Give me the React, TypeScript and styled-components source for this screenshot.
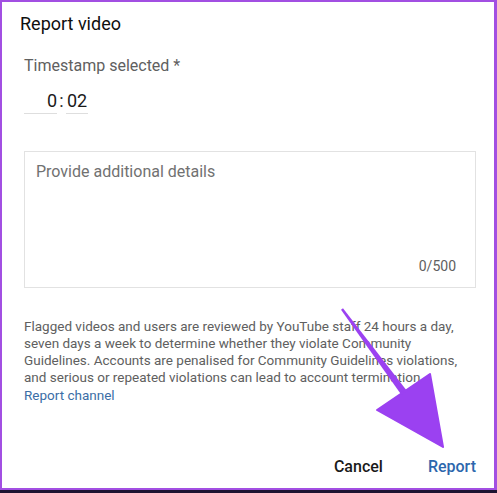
import * as React from "react";
import styled, { createGlobalStyle } from "styled-components";

const GlobalStyle = createGlobalStyle`
	html, body {
		margin: 0;
		padding: 0;
		background: #ffffff;
	}
	* {
		box-sizing: border-box;
	}
`;

const Page = styled.div`
	position: relative;
	width: 497px;
	height: 493px;
	font-family: Roboto, "Liberation Sans", Arial, sans-serif;
	background: #1d1331;
`;

const Dialog = styled.div`
	display: flex;
	flex-direction: column;
	width: 497px;
	height: 490px;
	padding: 10px 0 3px 22px;
	background: #ffffff;
	border-style: solid;
	border-color: #a24fe2;
	border-width: 2px 3px 2px 2px;
`;

const Title = styled.h2`
	margin: 0 0 19.5px -4px;
	font-size: 18px;
	line-height: 24px;
	font-weight: 400;
	color: #0f0f0f;
`;

const Label = styled.div`
	font-size: 16px;
	line-height: 20px;
	color: #606060;
`;

const TimeRow = styled.div`
	display: flex;
	align-items: flex-end;
	margin-top: 14.5px;
`;

const TimeInput = styled.input<{ $w: number; $align: "left" | "right" }>`
	width: ${(p) => p.$w}px;
	padding: ${(p) => (p.$align === "left" ? "0 0 1px 1px" : "0 0 1px 0")};
	border: none;
	border-bottom: 1px solid #dedede;
	outline: none;
	font-family: inherit;
	font-size: 18px;
	line-height: 22px;
	color: #1a1a1a;
	text-align: ${(p) => p.$align};
	background: transparent;
`;

const Colon = styled.span`
	width: 9px;
	text-align: center;
	font-size: 18px;
	line-height: 22px;
	padding-bottom: 2px;
	color: #333333;
`;

const DetailsBox = styled.div`
	display: flex;
	flex-direction: column;
	width: 452px;
	height: 137px;
	margin-top: 36.5px;
	padding: 10px 19px 13px 11px;
	border: 1px solid #e2e2e2;
`;

const DetailsInput = styled.textarea`
	flex: 1;
	padding: 0;
	border: none;
	outline: none;
	resize: none;
	font-family: inherit;
	font-size: 16px;
	line-height: 20px;
	color: #0f0f0f;
	&::placeholder {
		color: #717171;
	}
`;

const Counter = styled.div`
	text-align: right;
	font-size: 14px;
	line-height: 16px;
	color: #606060;
`;

const Notice = styled.p`
	width: 452px;
	margin: 30px 0 0;
	font-size: 13.5px;
	line-height: 17.3px;
	color: #606060;
`;

const NoticeLink = styled.a`
	display: block;
	color: #3b6ea6;
	text-decoration: none;
`;

const Footer = styled.div`
	display: flex;
	justify-content: flex-end;
	gap: 13px;
	margin-top: auto;
	padding-right: 2px;
`;

const ActionBtn = styled.button<{ $primary?: boolean }>`
	height: 36px;
	padding: 0 16px;
	border: none;
	background: transparent;
	font-family: inherit;
	font-size: 16px;
	font-weight: 500;
	line-height: 36px;
	color: ${(p) => (p.$primary ? "#2c67ad" : "#1a1a1a")};
	&:hover {
		cursor: pointer;
	}
`;

const ArrowLayer = styled.svg`
	position: absolute;
	top: 0;
	left: 0;
	pointer-events: none;
`;

const App: React.FC = () => {
	return (
		<Page>
			<GlobalStyle />
			<Dialog>
				<Title>Report video</Title>
				<Label>Timestamp selected *</Label>
				<TimeRow>
					<TimeInput $w={33} $align="right" value="0" readOnly />
					<Colon>:</Colon>
					<TimeInput $w={22} $align="left" value="02" readOnly />
				</TimeRow>
				<DetailsBox>
					<DetailsInput placeholder="Provide additional details" />
					<Counter>0/500</Counter>
				</DetailsBox>
				<Notice>
					Flagged videos and users are reviewed by YouTube staff 24 hours a day,
					seven days a week to determine whether they violate Community
					Guidelines. Accounts are penalised for Community Guidelines violations,
					and serious or repeated violations can lead to account termination.
					<NoticeLink href="#">Report channel</NoticeLink>
				</Notice>
				<Footer>
					<ActionBtn>Cancel</ActionBtn>
					<ActionBtn $primary>Report</ActionBtn>
				</Footer>
			</Dialog>
			<ArrowLayer width="497" height="493" viewBox="0 0 497 493">
				<polygon
					points="342.97,308.29 407.8,391.9 402.2,396.1 341.03,309.71"
					fill="#9b41f1"
				/>
				<polygon
					points="430,374 377,410 443,447"
					fill="#9b41f1"
					stroke="#9b41f1"
					strokeWidth="2"
					strokeLinejoin="round"
				/>
			</ArrowLayer>
		</Page>
	);
};

export default App;
